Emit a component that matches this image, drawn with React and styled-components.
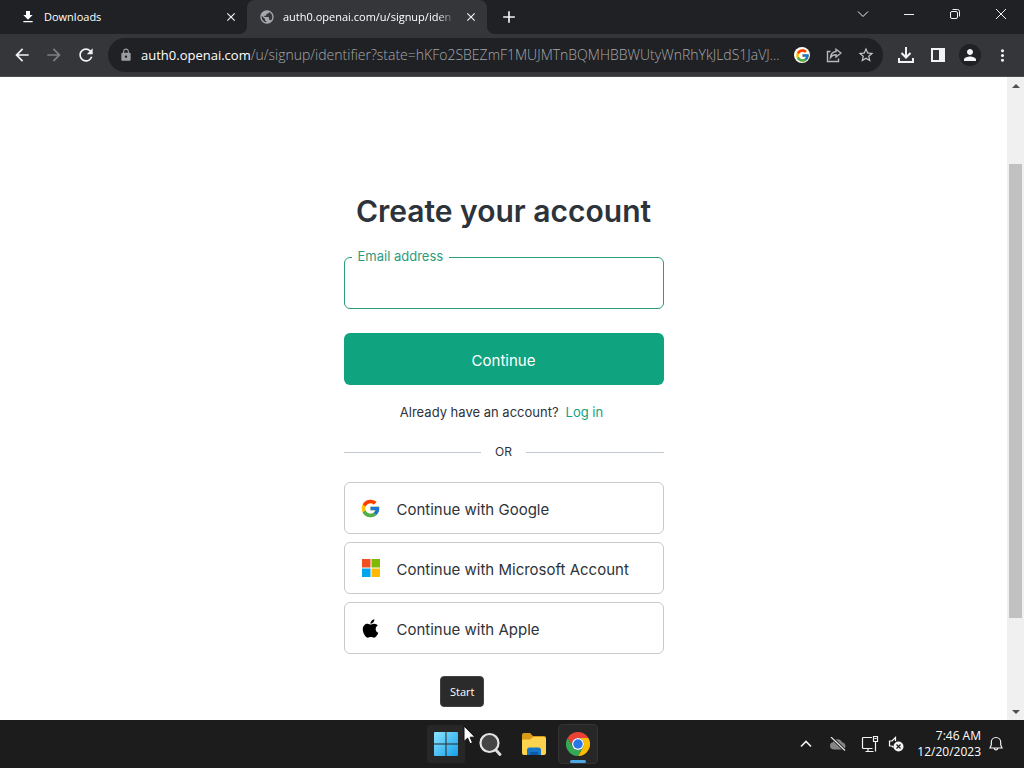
import React from "react";
import styled, { createGlobalStyle, css } from "styled-components";
import { FcGoogle } from "react-icons/fc";
import { FaApple } from "react-icons/fa";
import {
  MdArrowBack,
  MdArrowForward,
  MdRefresh,
  MdLock,
  MdPublic,
  MdStarBorder,
  MdAdd,
  MdClose,
  MdMoreVert,
  MdPerson,
} from "react-icons/md";

const system = `"Open Sans", "Noto Sans", sans-serif`;
const brand = `Inter, "Liberation Sans", sans-serif`;

const Global = createGlobalStyle`
  *, *::before, *::after { box-sizing: border-box; }
  body { margin: 0; background: #fff; }
  button, input { font: inherit; color: inherit; margin: 0; }
  button { border: 0; padding: 0; background: none; cursor: pointer; }
  svg { display: block; flex: none; }
`;

const Desktop = styled.div`
  display: flex;
  flex-direction: column;
  height: 100vh;
  overflow: hidden;
  font-family: ${system};
`;

/* Browser chrome */
const TabStrip = styled.header`
  display: flex;
  height: 34px;
  flex: none;
  background: #202124;
  color: #fff;
`;

const Tab = styled.div`
  position: relative;
  display: flex;
  align-items: center;
  gap: 8px;
  flex: 0 1 ${(p) => (p.$active ? 240 : 247)}px;
  min-width: 0;
  padding: 0 8px 0 ${(p) => (p.$active ? 12 : 20)}px;
  font-size: 12px;
  line-height: 16px;
  ${(p) =>
    p.$active &&
    css`
      background: #35363a;
      border-radius: 8px 8px 0 0;
      &::before,
      &::after {
        content: "";
        position: absolute;
        bottom: 0;
        width: 8px;
        height: 8px;
      }
      &::before {
        right: 100%;
        background: radial-gradient(circle at 0 0, transparent 8px, #35363a 8px);
      }
      &::after {
        left: 100%;
        background: radial-gradient(circle at 100% 0, transparent 8px, #35363a 8px);
      }
    `}
`;

const TabTitle = styled.span`
  flex: 1;
  min-width: 0;
  overflow: hidden;
  white-space: nowrap;
  font-size: 11px;
  ${(p) => p.$fade && "mask-image: linear-gradient(to right, #000 90%, transparent);"}
`;

const IconButton = styled.button`
  display: flex;
  align-items: center;
  justify-content: center;
  flex: none;
  width: ${(p) => p.$width || 32}px;
  height: ${(p) => p.$height || 32}px;
  color: ${(p) => p.$color || "#f1f3f4"};
`;

const NewTab = styled(IconButton)`
  margin: 1px 0 0 6px;
`;

const WindowControls = styled.div`
  display: flex;
  margin-left: auto;
`;

const Toolbar = styled.nav`
  display: flex;
  align-items: center;
  flex: none;
  height: 43px;
  padding: 0 6px;
  background: #35363a;
  border-bottom: 1px solid #4a4b4e;
`;

const Omnibox = styled.div`
  display: flex;
  align-items: center;
  flex: 1;
  min-width: 0;
  height: 34px;
  margin: 0 7px 0 6px;
  padding: 0 1px 0 11px;
  gap: 8px;
  border-radius: 17px;
  background: #202124;
`;

const Address = styled.div`
  flex: 1;
  min-width: 0;
  overflow: hidden;
  white-space: nowrap;
  font-size: 14px;
  font-weight: 300;
  line-height: 20px;
  color: #a5a8ac;
`;

const Host = styled.span`
  color: #fff;
  font-size: 13px;
  font-weight: 400;
`;

const OmniboxActions = styled.div`
  display: flex;
  flex: none;
  margin-left: -8px;
`;

const GoogleBadge = styled.span`
  display: flex;
  align-items: center;
  justify-content: center;
  width: 16px;
  height: 16px;
  border-radius: 50%;
  background: #fff;
`;

const Avatar = styled.span`
  display: flex;
  align-items: center;
  justify-content: center;
  width: 22px;
  height: 22px;
  border-radius: 50%;
  background: #202124;
`;

/* Web page */
const Viewport = styled.div`
  display: flex;
  flex: 1;
  min-height: 0;
  background: #fff;
`;

const Page = styled.main`
  display: flex;
  justify-content: center;
  flex: 1;
  min-width: 0;
  padding: 112px 16px 0;
  overflow: hidden;
  font-family: ${brand};
  color: #2d333a;
`;

const Form = styled.form`
  display: flex;
  flex-direction: column;
  width: 100%;
  max-width: 320px;
`;

const Title = styled.h1`
  margin: 0 0 24px;
  font-size: 30px;
  line-height: 44px;
  font-weight: 600;
  text-align: center;
  white-space: nowrap;
`;

const Field = styled.div`
  position: relative;
  margin-bottom: 24px;
`;

const FieldLabel = styled.label`
  position: absolute;
  left: 8px;
  top: -10px;
  padding: 0 6px;
  background: #fff;
  color: #2b9c7c;
  font-size: 13px;
  line-height: 18px;
`;

const TextBox = styled.input`
  display: block;
  width: 100%;
  height: 52px;
  padding: 0 16px;
  border: 1px solid #2b9c7c;
  border-radius: 6px;
  outline: 0;
  background: #fff;
  font-size: 16px;
`;

const Submit = styled.button`
  height: 52px;
  padding-top: 3px;
  border-radius: 6px;
  background: #10a37f;
  color: #fff;
  font-size: 15px;
  line-height: 24px;
`;

const LoginPrompt = styled.p`
  display: flex;
  justify-content: center;
  gap: 7px;
  margin: 17px 0 0;
  padding-right: 4px;
  font-size: 13px;
  line-height: 20px;
`;

const LoginLink = styled.a`
  color: #10a37f;
  text-decoration: none;
`;

const Divider = styled.div`
  display: flex;
  align-items: center;
  gap: 14px;
  margin: 20px 0;
  font-size: 12px;
  line-height: 20px;
  &::before,
  &::after {
    content: "";
    flex: 1;
    height: 1px;
    background: #c2c8d0;
  }
`;

const ProviderList = styled.div`
  display: flex;
  flex-direction: column;
  gap: 8px;
`;

const Provider = styled.button`
  display: flex;
  align-items: center;
  gap: 16px;
  height: 52px;
  padding: 3px 16px 0;
  border: 1px solid #c6c9ce;
  border-radius: 6px;
  font-size: 15px;
  line-height: 24px;
  text-align: left;
`;

const Scrollbar = styled.div`
  display: flex;
  flex-direction: column;
  flex: none;
  width: 17px;
  background: #f0f0f0;
`;

const Track = styled.div`
  display: grid;
  grid-template-rows: 70fr 454fr 85fr;
  flex: 1;
  padding: 0 2px;
`;

const Thumb = styled.div`
  grid-row: 2;
  background: #c1c1c1;
`;

/* Taskbar */
const Taskbar = styled.footer`
  display: grid;
  grid-template-columns: 1fr auto 1fr;
  align-items: center;
  flex: none;
  height: 48px;
  background: #1c1c1c;
  color: #fff;
`;

const Apps = styled.div`
  grid-column: 2;
  display: flex;
  gap: 4px;
`;

const AppButton = styled.button`
  position: relative;
  display: flex;
  align-items: center;
  justify-content: center;
  width: 40px;
  height: 40px;
  border: 1px solid ${(p) => (p.$running ? "#333" : "transparent")};
  border-radius: 4px;
  background: ${(p) => (p.$lit ? "#272727" : "transparent")};
  background-clip: padding-box;
  ${(p) =>
    p.$running &&
    css`
      &::after {
        content: "";
        position: absolute;
        bottom: 0;
        width: 16px;
        height: 3px;
        border-radius: 2px;
        background: #4ba7e4;
      }
    `}
`;

const StartSlot = styled.div`
  position: relative;
`;

const Tooltip = styled.span`
  position: absolute;
  left: 14px;
  bottom: 57px;
  padding: 7px 9px;
  border: 1px solid #434343;
  border-radius: 4px;
  background: #2b2b2b;
  font-size: 11px;
  line-height: 15px;
`;

const Pointer = styled.svg`
  position: absolute;
  left: 37px;
  top: 1px;
  z-index: 1;
`;

const Tray = styled.div`
  display: flex;
  align-items: center;
  justify-content: flex-end;
  padding-right: 13px;
`;

const Clock = styled.time`
  width: 75px;
  font-size: 12px;
  line-height: 16px;
  text-align: right;
  white-space: nowrap;
`;

const DownloadGlyph = () => (
  <svg width="16" height="16" viewBox="0 0 24 24" fill="currentColor">
    <path d="M5 20h14v-2H5zM19 9h-4V3H9v6H5l7 7z" />
  </svg>
);

const Line = ({ size = 16, box = 16, width = 1, children, ...rest }) => (
  <svg
    width={size}
    height={size}
    viewBox={`0 0 ${box} ${box}`}
    fill="none"
    stroke="currentColor"
    strokeWidth={width}
    {...rest}
  >
    {children}
  </svg>
);

const MicrosoftLogo = () => (
  <svg width="20" height="20" viewBox="0 0 20 20">
    <path fill="#f25022" d="M1 1h8.5v8.5H1z" />
    <path fill="#7fba00" d="M10.500 1H19v8.500h-8.500z" />
    <path fill="#00a4ef" d="M1 10.500h8.500V19H1z" />
    <path fill="#ffb900" d="M10.500 10.500H19V19h-8.500z" />
  </svg>
);

const WindowsLogo = () => (
  <svg width="24" height="24" viewBox="0 0 24 24">
    <defs>
      <linearGradient id="win" x1="0" y1="0" x2="24" y2="24" gradientUnits="userSpaceOnUse">
        <stop stopColor="#8be5ff" />
        <stop offset="1" stopColor="#159fe9" />
      </linearGradient>
    </defs>
    <path fill="url(#win)" d="M1 0h10.500v11.500H0V1a1 1 0 0 1 1-1zM12.500 0H23a1 1 0 0 1 1 1v10.500H12.500zM0 12.500h11.500V24H1a1 1 0 0 1-1-1zM12.500 12.500H24V23a1 1 0 0 1-1 1H12.500z" />
  </svg>
);

const SearchGlyph = () => (
  <svg width="26" height="26" viewBox="0 0 26 26" fill="none">
    <path d="M18 18 23 23.500" stroke="#dcdcdc" strokeWidth="3" strokeLinecap="round" />
    <circle cx="12.500" cy="12" r="9" fill="#454545" stroke="#e4e4e4" strokeWidth="2.200" />
  </svg>
);

const FolderGlyph = () => (
  <svg width="26" height="24" viewBox="0 0 26 24">
    <path fill="#d99a18" d="M1 3a2 2 0 0 1 2-2h6l3 3h11a2 2 0 0 1 2 2v5H1z" />
    <path fill="#fbd34f" d="M1 7.500h8L12 5h11a2 2 0 0 1 2 2v14a2 2 0 0 1-2 2H3a2 2 0 0 1-2-2z" />
    <path fill="#1677ca" d="M6 23v-5a2.500 2.500 0 0 1 2.500-2.500h9A2.500 2.500 0 0 1 20 18v5z" />
    <path fill="#0c5aa4" d="M9 20h8v3H9z" />
  </svg>
);

const ChromeLogo = () => (
  <svg width="24" height="24" viewBox="0 0 48 48">
    <path fill="#ea4335" d="M3.200 12A24 24 0 0 1 44.800 12H24a12 12 0 0 0-10.400 18z" />
    <path fill="#fbbc04" d="M44.800 12A24 24 0 0 1 24 48l10.400-18A12 12 0 0 0 24 12z" />
    <path fill="#34a853" d="M24 48A24 24 0 0 1 3.200 12l10.400 18a12 12 0 0 0 20.800 0z" />
    <circle cx="24" cy="24" r="12" fill="#fff" />
    <circle cx="24" cy="24" r="9.500" fill="#2876e8" />
  </svg>
);

const providers = [
  { name: "Google", icon: <FcGoogle size={21} /> },
  { name: "Microsoft Account", icon: <MicrosoftLogo /> },
  { name: "Apple", icon: <FaApple size={21} color="#000" /> },
];

const ProviderIcon = styled.span`
  display: flex;
  justify-content: center;
  width: 20px;
  padding-bottom: 3px;
`;

export default function App() {
  return (
    <Desktop>
      <Global />
      <TabStrip>
        <Tab>
          <DownloadGlyph />
          <TabTitle>Downloads</TabTitle>
          <IconButton $width={16} $height={16} aria-label="Close Downloads">
            <MdClose size={14} />
          </IconButton>
        </Tab>
        <Tab $active>
          <MdPublic size={16} color="#a5a8ac" />
          <TabTitle $fade>auth0.openai.com/u/signup/iden</TabTitle>
          <IconButton $width={16} $height={16} aria-label="Close tab">
            <MdClose size={14} />
          </IconButton>
        </Tab>
        <NewTab aria-label="New tab">
          <MdAdd size={20} />
        </NewTab>
        <WindowControls>
          <IconButton $width={46} $height={28} aria-label="Search tabs">
            <Line size={12} box={12}><path d="m1 3.500 5 5 5-5" /></Line>
          </IconButton>
          <IconButton $width={46} $height={28} aria-label="Minimize">
            <Line size={12} box={12}><path d="M1 6.500h10" /></Line>
          </IconButton>
          <IconButton $width={46} $height={28} aria-label="Restore">
            <Line size={12} box={12}>
              <rect x="1.500" y="3.500" width="7" height="7" rx="1.500" />
              <path d="M3.500 1.500h5a2 2 0 0 1 2 2v5" />
            </Line>
          </IconButton>
          <IconButton $width={46} $height={28} aria-label="Close window">
            <Line size={12} box={12}><path d="m1 1 10 10M11 1 1 11" /></Line>
          </IconButton>
        </WindowControls>
      </TabStrip>

      <Toolbar>
        <IconButton aria-label="Back"><MdArrowBack size={20} /></IconButton>
        <IconButton $color="#7d7f82" aria-label="Forward"><MdArrowForward size={20} /></IconButton>
        <IconButton aria-label="Reload"><MdRefresh size={20} /></IconButton>
        <Omnibox>
          <MdLock size={14} color="#9a9da1" />
          <Address>
            <Host>auth0.openai.com</Host>/u/signup/identifier?state=hKFo2SBEZmF1MUJMTnBQMHBBWUtyWnRhYkJLdS1JaVJ...
          </Address>
          <OmniboxActions>
            <IconButton aria-label="Search with Google">
              <GoogleBadge><FcGoogle size={15} /></GoogleBadge>
            </IconButton>
            <IconButton $color="#b5b8bc" aria-label="Share">
              <Line size={16} width={1.4}>
                <path d="M4.500 4.500H1.500v10h11v-3" />
                <path d="M10 2.200 15 6l-5 4V7.800c-2.500 0-4.200.8-5.500 2.700.3-3.500 2.200-5.600 5.500-6z" />
              </Line>
            </IconButton>
            <IconButton $color="#c4c7ca" aria-label="Bookmark"><MdStarBorder size={18} /></IconButton>
          </OmniboxActions>
        </Omnibox>
        <IconButton aria-label="Downloads">
          <Line size={18} box={18} width={2}>
            <path d="M9 1v10M4.500 7 9 11.500 13.500 7M2 12v4h14v-4" />
          </Line>
        </IconButton>
        <IconButton aria-label="Side panel">
          <svg width="16" height="16" viewBox="0 0 16 16" fill="currentColor">
            <path fillRule="evenodd" d="M1 1h14v14H1zM3 3v10h6V3z" />
          </svg>
        </IconButton>
        <IconButton aria-label="Profile"><Avatar><MdPerson size={18} /></Avatar></IconButton>
        <IconButton aria-label="Menu"><MdMoreVert size={19} /></IconButton>
      </Toolbar>

      <Viewport>
        <Page>
          <Form onSubmit={(e) => e.preventDefault()}>
            <Title>Create your account</Title>
            <Field>
              <TextBox id="email" type="email" />
              <FieldLabel htmlFor="email">Email address</FieldLabel>
            </Field>
            <Submit type="submit">Continue</Submit>
            <LoginPrompt>
              Already have an account? <LoginLink href="#login">Log in</LoginLink>
            </LoginPrompt>
            <Divider>OR</Divider>
            <ProviderList>
              {providers.map((p) => (
                <Provider type="button" key={p.name}>
                  <ProviderIcon>{p.icon}</ProviderIcon>
                  Continue with {p.name}
                </Provider>
              ))}
            </ProviderList>
          </Form>
        </Page>
        <Scrollbar>
          <IconButton $width={17} $height={17} $color="#505050" aria-label="Scroll up">
            <svg width="8" height="4" viewBox="0 0 8 4" fill="currentColor"><path d="m0 4 4-4 4 4z" /></svg>
          </IconButton>
          <Track><Thumb /></Track>
          <IconButton $width={17} $height={17} $color="#505050" aria-label="Scroll down">
            <svg width="8" height="4" viewBox="0 0 8 4" fill="currentColor"><path d="m0 0 4 4 4-4z" /></svg>
          </IconButton>
        </Scrollbar>
      </Viewport>

      <Taskbar>
        <Apps>
          <StartSlot>
            <AppButton $lit aria-label="Start"><WindowsLogo /></AppButton>
            <Tooltip role="tooltip">Start</Tooltip>
            <Pointer width="13" height="20" viewBox="0 0 13 20">
              <path d="M1 1v15.500l3.600-3.400 2.400 5.600 2.500-1.100-2.400-5.400H12z" fill="#fff" stroke="#111" />
            </Pointer>
          </StartSlot>
          <AppButton aria-label="Search"><SearchGlyph /></AppButton>
          <AppButton aria-label="File Explorer"><FolderGlyph /></AppButton>
          <AppButton $lit $running aria-label="Google Chrome"><ChromeLogo /></AppButton>
        </Apps>
        <Tray>
          <IconButton aria-label="Hidden icons">
            <Line size={12} box={12} width={1.6}><path d="m1 8.500 5-5 5 5" /></Line>
          </IconButton>
          <IconButton aria-label="OneDrive">
            <svg width="18" height="14" viewBox="0 0 18 14">
              <path fill="#858585" d="M4.500 12.500a3.700 3.700 0 0 1-.6-7.300 5 5 0 0 1 9.300.3 3.600 3.600 0 0 1 .8 7z" />
              <path d="m2 0 14 13.500" stroke="#1c1c1c" strokeWidth="3" />
              <path d="m2 0 14 13.500" stroke="#e8e8e8" strokeWidth="1.200" />
            </svg>
          </IconButton>
          <IconButton aria-label="Network">
            <Line size={18} box={18} width={1.2}>
              <path d="M11 2.500H2.500a1 1 0 0 0-1 1v9a1 1 0 0 0 1 1h9M7 13.500v3M4.500 16.500h8" />
              <path d="M12.500 1.500h4v5h-4zM13.500 3.500h2M14.500 6.500v10" />
            </Line>
          </IconButton>
          <IconButton $width={20} aria-label="Volume muted">
            <svg width="16" height="16" viewBox="0 0 16 16" fill="none">
              <path d="M7.500 5V1.500L4 5H1.500v5H4l1.500 1.500" stroke="#fff" strokeWidth="1.200" />
              <circle cx="10.500" cy="10.500" r="5" fill="#f4f4f4" />
              <path d="m8.500 8.500 4 4m0-4-4 4" stroke="#1c1c1c" strokeWidth="1.200" />
            </svg>
          </IconButton>
          <Clock dateTime="2023-12-20T07:46">
            7:46 AM
            <br />
            12/20/2023
          </Clock>
          <IconButton $width={30} aria-label="Notifications">
            <Line size={16} width={1.2}>
              <path d="M8 1.500a4.700 4.700 0 0 0-4.700 4.700V9L2 12h12l-1.300-3V6.200A4.700 4.700 0 0 0 8 1.500zM6.200 12.500a1.900 1.900 0 0 0 3.600 0" />
            </Line>
          </IconButton>
        </Tray>
      </Taskbar>
    </Desktop>
  );
}
